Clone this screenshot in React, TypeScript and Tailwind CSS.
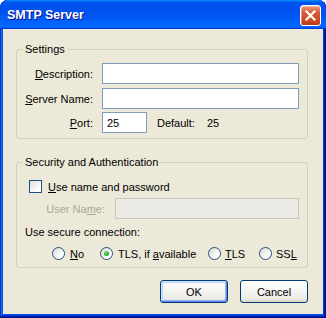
import React from "react";

const font = "font-['Liberation_Sans',Arial,sans-serif]";

function Radio({ checked }: { checked?: boolean }) {
  return (
    <span className="w-[13px] h-[13px] rounded-full border border-[#1C5180] bg-[linear-gradient(135deg,#D8D8D2,#FFFFFF_70%)] flex items-center justify-center shrink-0">
      {checked && (
        <span className="w-[5px] h-[5px] rounded-full bg-[radial-gradient(circle_at_40%_35%,#7EE07A,#21A121_70%)]" />
      )}
    </span>
  );
}

export default function App() {
  return (
    <div
      className={`${font} w-[326px] h-[318px] flex flex-col rounded-t-[8px] overflow-hidden bg-[#0055E5] shadow-[inset_-1px_-1px_#00138c,inset_1px_1px_#0831d9,inset_-2px_-2px_#001ea0,inset_2px_2px_#166aee,inset_-3px_-3px_#003bda,inset_3px_3px_#0855dd] text-[11px] text-black`}
    >
      {/* Title bar */}
      <div className="h-[29px] shrink-0 flex items-start justify-between pl-[7px] pr-[5px] rounded-t-[8px] bg-[linear-gradient(180deg,#0997ff,#0053ee_8%,#0050ee_40%,#0066ff_88%,#0066ff_93%,#005bff_95%,#003dd7_96%,#003dd7)]">
        <span className="mt-[8px] text-white font-bold text-[12.5px] leading-[14px] [text-shadow:1px_1px_#0f1089] font-['Liberation_Sans',Arial,sans-serif]">
          SMTP Server
        </span>
        <span className="mt-[5px] w-[21px] h-[21px] rounded-[3px] border border-white bg-[linear-gradient(180deg,#EE9A7A,#DB5A35_35%,#CC4622_80%,#B93A1A)] shadow-[inset_1px_1px_rgba(255,255,255,0.35)] flex items-center justify-center">
          <svg width="13" height="13" viewBox="0 0 13 13">
            <path d="M2.5 2.5 L10.5 10.5 M10.5 2.5 L2.5 10.5" stroke="white" strokeWidth="2.2" strokeLinecap="square" />
          </svg>
        </span>
      </div>

      {/* Body */}
      <div className="flex-1 mx-[3px] mb-[4px] bg-[#ECE9D8] flex flex-col">
        {/* Settings */}
        <fieldset className="mt-[13px] ml-[13px] mr-[15px] border border-[#D0D0BF] rounded-[3px] pb-[5px]">
          <legend className="ml-[6px] px-[2px] leading-[14px]">Settings</legend>
          <div className="mt-[7px] flex items-center h-[21px]">
            <span className="w-[76px] text-right leading-[14px]">
              <u>D</u>escription:
            </span>
            <div className="ml-[9px] w-[197px] h-[21px] border border-[#7F9DB9] bg-white" />
          </div>
          <div className="mt-[4px] flex items-center h-[21px]">
            <span className="w-[76px] text-right leading-[14px]">
              <u>S</u>erver Name:
            </span>
            <div className="ml-[9px] w-[197px] h-[21px] border border-[#7F9DB9] bg-white" />
          </div>
          <div className="mt-[3px] flex items-center h-[21px]">
            <span className="w-[76px] text-right leading-[14px]">
              <u>P</u>ort:
            </span>
            <div className="ml-[9px] w-[45px] h-[21px] border border-[#7F9DB9] bg-white flex items-center pl-[4px] leading-[14px]">
              25
            </div>
            <span className="ml-[10px] w-[50px] leading-[14px]">Default:</span>
            <span className="leading-[14px]">25</span>
          </div>
        </fieldset>

        {/* Security */}
        <fieldset className="mt-[16px] ml-[13px] mr-[15px] border border-[#D0D0BF] rounded-[3px] pb-[7px]">
          <legend className="ml-[6px] px-[2px] leading-[14px]">Security and Authentication</legend>
          <div className="mt-[11px] ml-[12px] flex items-center h-[13px]">
            <span className="w-[13px] h-[13px] border border-[#1C5180] bg-[linear-gradient(135deg,#DCDCD7,#FFFFFF_75%)] shrink-0" />
            <span className="ml-[6px] leading-[14px]">
              <u>U</u>se name and password
            </span>
          </div>
          <div className="mt-[5px] flex items-center h-[21px]">
            <span className="w-[88px] text-right leading-[14px] text-[#ACA899]">
              User Na<u>m</u>e:
            </span>
            <div className="ml-[10px] w-[184px] h-[21px] border border-[#C9C7BA] bg-[#EBEAE4]" />
          </div>
          <div className="mt-[6px] ml-[8px] leading-[14px]">Use secure connection:</div>
          <div className="mt-[8px] ml-[35px] flex items-center h-[13px]">
            <div className="w-[48px] flex items-center">
              <Radio />
              <span className="ml-[5px] leading-[14px]">
                <u>N</u>o
              </span>
            </div>
            <div className="w-[108px] flex items-center">
              <Radio checked />
              <span className="ml-[5px] leading-[14px]">
                TLS, if <u>a</u>vailable
              </span>
            </div>
            <div className="w-[51px] flex items-center">
              <Radio />
              <span className="ml-[4px] leading-[14px]">
                <u>T</u>LS
              </span>
            </div>
            <div className="flex items-center">
              <Radio />
              <span className="ml-[4px] leading-[14px]">
                SS<u>L</u>
              </span>
            </div>
          </div>
        </fieldset>

        {/* Buttons */}
        <div className="mt-[12px] mr-[15px] flex justify-end gap-[12px]">
          <button className="w-[68px] h-[23px] rounded-[3px] border border-[#003C74] bg-[linear-gradient(180deg,#FFFFFF,#ECEBE6_86%,#D6D0C5)] shadow-[inset_-1px_-1px_#6982EE,inset_1px_1px_#CEE7FF,inset_-2px_-2px_#8CB4F2,inset_2px_2px_#BCD4F6] leading-[14px]">
            OK
          </button>
          <button className="w-[68px] h-[23px] rounded-[3px] border border-[#003C74] bg-[linear-gradient(180deg,#FFFFFF,#ECEBE6_86%,#D6D0C5)] leading-[14px]">
            Cancel
          </button>
        </div>
      </div>
    </div>
  );
}
